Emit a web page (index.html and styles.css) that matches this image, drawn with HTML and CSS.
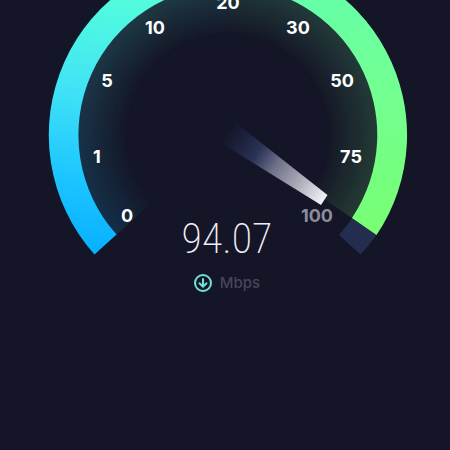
FILE: index.html
```html
<!DOCTYPE html>
<html lang="en">
<head>
  <meta charset="utf-8">
  <meta name="viewport" content="width=device-width, initial-scale=1">
  <title>Speed test</title>
  <link rel="stylesheet" href="styles.css">
</head>
<body>
  <main class="speedtest">
    <svg class="gauge" viewBox="0 0 450 270" role="img" aria-label="Download speed gauge">
      <defs>
        <linearGradient id="cool" gradientUnits="userSpaceOnUse" x1="110" y1="250" x2="150" y2="-20">
          <stop offset="0" stop-color="#09b2ff"/>
          <stop offset="0.25" stop-color="#1dc6ff"/>
          <stop offset="0.55" stop-color="#3fe2f6"/>
          <stop offset="0.8" stop-color="#4cf5e5"/>
          <stop offset="1" stop-color="#58ffd6"/>
        </linearGradient>
        <linearGradient id="warm" gradientUnits="userSpaceOnUse" x1="290" y1="-20" x2="350" y2="240">
          <stop offset="0" stop-color="#62ffac"/>
          <stop offset="0.4" stop-color="#70ff96"/>
          <stop offset="1" stop-color="#78ff74"/>
        </linearGradient>
        <radialGradient id="falloff" gradientUnits="userSpaceOnUse" cx="227.500" cy="135" r="149">
          <stop offset="0.66" stop-color="#fff" stop-opacity="0"/>
          <stop offset="0.8" stop-color="#fff" stop-opacity="0.07"/>
          <stop offset="1" stop-color="#fff" stop-opacity="0.16"/>
        </radialGradient>
        <linearGradient id="beam" gradientUnits="userSpaceOnUse" x1="224" y1="132" x2="325" y2="200">
          <stop offset="0" stop-color="#26345c" stop-opacity="0"/>
          <stop offset="0.12" stop-color="#26345c" stop-opacity="0.3"/>
          <stop offset="0.32" stop-color="#303a60" stop-opacity="0.8"/>
          <stop offset="0.5" stop-color="#6d6f88"/>
          <stop offset="0.75" stop-color="#aeadbb"/>
          <stop offset="1" stop-color="#f6f4fa"/>
        </linearGradient>
        <mask id="glow-mask" maskUnits="userSpaceOnUse" x="0" y="-50" width="450" height="350">
          <path fill="url(#falloff)" d="M227.500 135 115 236A151 151 0 1 1 353.500 219Z"/>
        </mask>
      </defs>

      <g mask="url(#glow-mask)">
        <path fill="url(#cool)" d="M60-50H227.500V290H60Z"/>
        <path fill="url(#warm)" d="M227.500-50H400V290H227.500Z"/>
      </g>

      <path fill="#222d50" d="M352 218 376.500 235A179 179 0 0 1 360.500 254.500L339 235A149 149 0 0 0 352 218Z"/>
      <path fill="url(#cool)" d="M94.500 254.500A179 179 0 0 1 227.500-44V-14A149 149 0 0 0 116.500 234.500Z"/>
      <path fill="url(#warm)" d="M227.500-44A179 179 0 0 1 376.500 235L352 218A149 149 0 0 0 227.500-14Z"/>
      <path fill="url(#beam)" d="M236 123 327.500 195 321 205 221 143Z"/>

      <g class="ticks">
        <text x="127" y="222">0</text>
        <text x="97" y="163">1</text>
        <text x="107" y="87">5</text>
        <text x="155" y="34">10</text>
        <text x="228" y="9">20</text>
        <text x="298" y="34">30</text>
        <text x="342" y="87">50</text>
        <text x="351" y="163">75</text>
        <text class="tick-off" x="317" y="222">100</text>
      </g>
    </svg>

    <section class="readout" aria-label="Download speed">
      <output class="value">94.07</output>
      <div class="unit">
        <svg class="icon" viewBox="0 0 18 18" aria-hidden="true">
          <circle cx="9" cy="9" r="8"/>
          <path d="M9 5V12.500M5.500 9.300 9 12.800 12.500 9.300"/>
        </svg>
        <span>Mbps</span>
      </div>
    </section>
  </main>
</body>
</html>
```
FILE: styles.css
```css
body {
  margin: 0;
  min-height: 100vh;
  background: #141526;
  font-family: Inter, "Liberation Sans", sans-serif;
}

.speedtest {
  display: grid;
  justify-items: center;
}

.gauge {
  grid-area: 1 / 1;
  width: 100%;
}

.ticks {
  fill: #fff;
  font-size: 18px;
  font-weight: 700;
  text-anchor: middle;
}

.tick-off {
  fill: #8c8c9b;
}

.readout {
  grid-area: 1 / 1;
  align-self: end;
  display: flex;
  flex-direction: column;
  align-items: center;
  gap: 14px;
  margin-bottom: -23px;
  padding-left: 4px;
}

.value {
  color: #f0edf8;
  font-family: "Roboto Condensed", "Liberation Sans Narrow", Roboto, sans-serif;
  font-size: 42px;
  font-weight: 200;
  line-height: 40px;
}

.unit {
  display: flex;
  align-items: center;
  gap: 8px;
  color: #45465a;
  font-size: 15px;
  font-weight: 500;
  line-height: 20px;
}

.icon {
  width: 18px;
  height: 18px;
  fill: none;
  stroke: #6ee3da;
  stroke-width: 2;
  stroke-linecap: round;
  stroke-linejoin: round;
}
```
